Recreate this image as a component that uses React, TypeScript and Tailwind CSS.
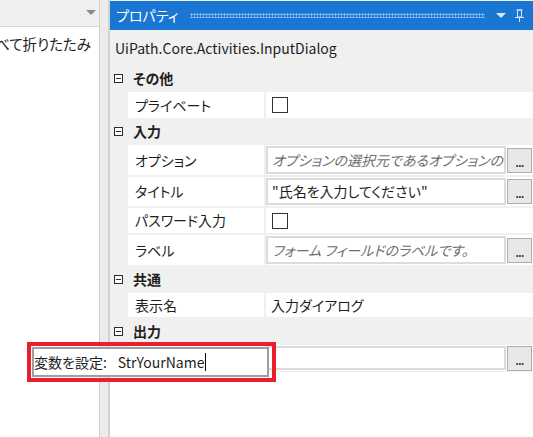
import React from "react";

const Minus = () => (
  <div className="w-[9px] h-[9px] border border-[#2b2b2b] bg-white flex items-center justify-center shrink-0">
    <div className="w-[5px] h-[1px] bg-[#2b2b2b]" />
  </div>
);

const Category = ({ label, h }: { label: string; h: string }) => (
  <div className={`${h} flex items-center pl-[4px]`}>
    <Minus />
    <span className="ml-[10px] font-bold text-[14px] text-[#1e1e1e]">{label}</span>
  </div>
);

const Dots = () => (
  <div className="w-[25px] h-[25px] shrink-0 border border-[#adadad] bg-[#e8e8e8] flex items-end justify-center pb-[4px]">
    <span className="text-[10px] leading-none text-[#1e2a5a] font-bold tracking-[-0.5px]">...</span>
  </div>
);

const Row = ({
  name,
  h,
  children,
}: {
  name: string;
  h: string;
  children?: React.ReactNode;
}) => (
  <div className={`${h} flex pl-[18px] gap-[2px]`}>
    <div className="w-[136px] bg-white flex items-center pl-[7px] whitespace-nowrap overflow-hidden">
      {name}
    </div>
    <div className="flex-1 bg-white flex items-center min-w-0">{children}</div>
  </div>
);

const InputBox = ({
  text,
  placeholder,
}: {
  text?: string;
  placeholder?: boolean;
}) => (
  <div className="flex items-center w-full h-full py-[1px] gap-[1px] pr-[1px]">
    <div
      className={`flex-1 min-w-0 h-full border-2 border-[#dcdcdc] bg-white flex items-center pl-[4px] whitespace-nowrap overflow-hidden ${
        placeholder ? "italic text-[#6e6e6e]" : "text-[#1e1e1e]"
      }`}
    >
      {text}
    </div>
    <Dots />
  </div>
);

const Check = () => (
  <div className="ml-[6px] w-[16px] h-[16px] border border-[#333333] bg-white" />
);

export default function App() {
  return (
    <div className="w-[533px] h-[437px] flex bg-white overflow-hidden relative font-['Noto_Sans_CJK_JP','Noto_Sans',sans-serif] text-[14px] text-[#1e1e1e] [font-feature-settings:'palt']">
      {/* left panel */}
      <div className="w-[100px] shrink-0 flex flex-col border-r border-[#cfcfcf]">
        <div className="h-[27px] bg-[#efefef] border-b border-[#d4d4d4] flex items-center justify-end pr-[3px]">
          <svg width="10" height="6" viewBox="0 0 10 6">
            <path d="M0 0 L10 0 L5 5 Z" fill="#8a8a8a" />
          </svg>
        </div>
        <div className="h-[34px] flex items-center justify-end pr-[8px] whitespace-nowrap overflow-hidden text-[14.5px]">
          すべて折りたたみ
        </div>
      </div>
      {/* splitter */}
      <div className="w-[10px] shrink-0 bg-[#ebebeb] border-r-[2px] border-[#d2d2d2]" />
      {/* properties panel */}
      <div className="flex-1 flex flex-col min-w-0">
        <div className="h-[30px] border-t border-[#eeeeee] bg-[#1976d2] flex items-center shrink-0">
          <span className="pl-[6px] text-white text-[14px] whitespace-nowrap shrink-0">プロパティ</span>
          <div className="ml-[12px] flex-1 h-[5px] bg-[radial-gradient(circle,#8cbdf0_45%,transparent_55%)] bg-[length:3px_3px]" />
          <svg className="ml-[11px] shrink-0" width="10" height="6" viewBox="0 0 10 6">
            <path d="M0 0 L10 0 L5 5 Z" fill="#d8e8f8" />
          </svg>
          <svg className="ml-[9px] mr-[9px] shrink-0" width="9" height="13" viewBox="0 0 9 13">
            <rect x="1.5" y="0.5" width="6" height="1" fill="#d8e8f8" />
            <rect x="2.5" y="1" width="4" height="7" fill="none" stroke="#d8e8f8" strokeWidth="1" />
            <rect x="0" y="8" width="9" height="1" fill="#d8e8f8" />
            <rect x="4" y="9" width="1" height="4" fill="#d8e8f8" />
          </svg>
        </div>
        <div className="h-[36px] shrink-0 bg-[#f0f0f0] flex items-center pl-[5px] whitespace-nowrap">
          UiPath.Core.Activities.InputDialog
        </div>
        <div className="flex flex-col gap-[2px] bg-[#f0f0f0] pb-[1px] shrink-0">
          <Category label="その他" h="h-[24px]" />
          <Row name="プライベート" h="h-[26px]">
            <Check />
          </Row>
          <Category label="入力" h="h-[23px]" />
          <Row name="オプション" h="h-[30px]">
            <InputBox text="オプションの選択元であるオプションの配列" placeholder />
          </Row>
          <Row name="タイトル" h="h-[29px]">
            <InputBox text={"\"氏名を入力してください\""} />
          </Row>
          <Row name="パスワード入力" h="h-[25px]">
            <Check />
          </Row>
          <Row name="ラベル" h="h-[30px]">
            <InputBox text="フォーム フィールドのラベルです。" placeholder />
          </Row>
          <Category label="共通" h="h-[24px]" />
          <Row name="表示名" h="h-[24px]">
            <span className="pl-[5px] whitespace-nowrap">入力ダイアログ</span>
          </Row>
          <Category label="出力" h="h-[24px]" />
          <Row name="変数を設定" h="h-[26px]">
            <InputBox text="" />
          </Row>
        </div>
        <div className="flex-1 bg-white" />
      </div>

      {/* highlighted overlay */}
      <div className="absolute left-[27px] top-[342px] w-[249px] h-[40px] border-[4px] border-[#e8202a] p-[1px] pr-[3px] flex">
        <div className="flex-1 border-2 border-[#9e9e9e] bg-white flex items-center whitespace-nowrap text-[14px]">
          <span>変数を設定:</span>
          <span className="ml-[11px]">StrYourName</span>
          <span className="ml-[1px] w-[1px] h-[18px] bg-black" />
        </div>
      </div>
    </div>
  );
}
